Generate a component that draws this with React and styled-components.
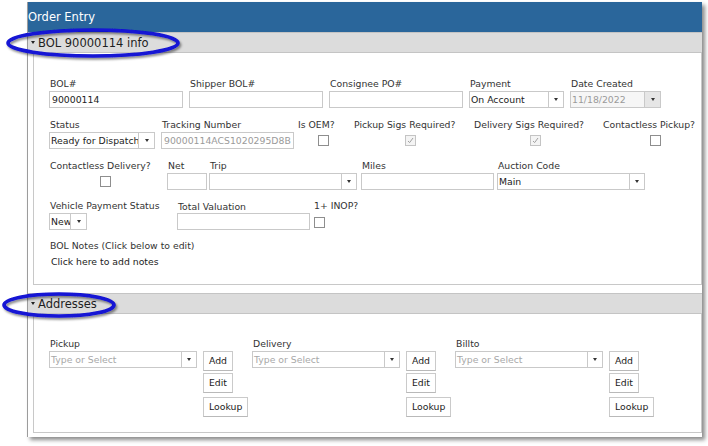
import React from "react";
import styled, { createGlobalStyle } from "styled-components";

const Global = createGlobalStyle`
  html, body { margin: 0; padding: 0; background: #fff; }
  body { font-family: "DejaVu Sans", Verdana, sans-serif; }
  * { box-sizing: border-box; }
`;

const Page = styled.div`
  position: relative;
  width: 708px;
  height: 446px;
  padding: 2px 0 0 27px;
  overflow: hidden;
`;

const Window = styled.div`
  width: 675px;
  background: #fff;
  border-left: 1px solid #9c9c9c;
  box-shadow: 3px 3px 4px rgba(0, 0, 0, 0.45);
  padding-bottom: 4px;
  display: flex;
  flex-direction: column;
`;

const TitleBar = styled.div`
  height: 30px;
  background: #2a669b;
  color: #fff;
  font-size: 11.5px;
  display: flex;
  align-items: center;
  padding-left: 0;
`;

const SectionHeader = styled.div`
  height: 21px;
  margin-top: ${(p) => p.$mt || 0}px;
  background: #dcdcdc;
  border-top: 1px solid #c4c4c4;
  border-bottom: 1px solid #c4c4c4;
  display: flex;
  align-items: center;
  padding-left: 3px;
  font-size: 11.5px;
  color: #1e1e1e;
`;

const Caret = styled.span`
  width: 0;
  height: 0;
  border-left: 2.5px solid transparent;
  border-right: 2.5px solid transparent;
  border-top: 3px solid #222;
  margin-right: 3px;
`;

const SectionBody = styled.div`
  margin-left: 5px;
  border: 1px solid #c8c8c8;
  border-top: none;
  padding: ${(p) => p.$pt}px 0 ${(p) => p.$pb}px 15px;
  font-size: 9.3px;
  color: #333;
`;

const Row = styled.div`
  display: flex;
  align-items: flex-start;
  margin-top: ${(p) => p.$mt || 0}px;
`;

const Field = styled.div`
  display: flex;
  flex-direction: column;
  width: ${(p) => p.$w}px;
  margin-left: ${(p) => p.$ml || 0}px;
  flex-shrink: 0;
`;

const Label = styled.div`
  height: 12px;
  line-height: 12px;
  margin-bottom: 1px;
  padding-left: 1px;
  white-space: nowrap;
  color: #333;
  font-size: 9.3px;
  margin-top: ${(p) => p.$drop || 0}px;
`;

const TextBox = styled.input`
  width: ${(p) => (p.$w ? p.$w + "px" : "100%")};
  height: 17px;
  border: 1px solid #c9c9c9;
  padding: 0 2px;
  margin: 0;
  font-family: "DejaVu Sans", Verdana, sans-serif;
  font-size: 9.3px;
  color: ${(p) => (p.$muted ? "#9a9a9a" : "#222")};
  background: #fff;
  outline: none;
  &::placeholder { color: #a8a8a8; }
`;

const SelectBox = styled.div`
  width: ${(p) => p.$w}px;
  height: 17px;
  border: 1px solid #c9c9c9;
  display: flex;
  background: ${(p) => (p.$disabled ? "#f6f6f6" : "#fff")};
`;

const SelectText = styled.div`
  flex: 1;
  min-width: 0;
  padding-left: 1px;
  line-height: 15px;
  white-space: nowrap;
  overflow: hidden;
  font-size: 9.3px;
  color: ${(p) => (p.$tone === "muted" ? "#9a9a9a" : p.$tone === "ph" ? "#a8a8a8" : "#222")};
`;

const SelectArrow = styled.div`
  width: ${(p) => p.$aw || 15}px;
  border-left: 1px solid #c9c9c9;
  display: flex;
  align-items: center;
  justify-content: center;
  background: ${(p) => (p.$disabled ? "#e6e6e6" : "transparent")};
  &::after {
    content: "";
    border-left: 2.5px solid transparent;
    border-right: 2.5px solid transparent;
    border-top: 3px solid #333;
  }
`;

const CheckColumn = styled.div`
  display: flex;
  flex-direction: column;
  width: ${(p) => p.$w}px;
  margin-left: ${(p) => p.$ml || 0}px;
  flex-shrink: 0;
`;

const CheckBox = styled.span`
  display: block;
  width: 11px;
  height: 11px;
  margin-top: ${(p) => p.$mt || 3}px;
  margin-left: ${(p) => p.$off}px;
  border: 1px solid ${(p) => (p.$checked ? "#c4c4c4" : "#8e8e8e")};
  background: ${(p) => (p.$checked ? "#f4f4f4" : "#fff")};
  position: relative;
  svg { position: absolute; left: 1px; top: 1px; }
`;

const NotesTitle = styled.div`
  margin-top: 10px;
  height: 12px;
  line-height: 12px;
  padding-left: 1px;
  color: #333;
`;

const NotesLink = styled.div`
  margin-top: 4px;
  height: 12px;
  line-height: 12px;
  padding-left: 2px;
  color: #222;
`;

const AddressRow = styled.div`
  display: flex;
  align-items: flex-start;
`;

const AddressGroup = styled.div`
  width: 203px;
  display: flex;
  align-items: flex-start;
  flex-shrink: 0;
`;

const ButtonStack = styled.div`
  display: flex;
  flex-direction: column;
  align-items: flex-start;
  margin-left: 6px;
  margin-top: 13px;
`;

const SmallButton = styled.button`
  height: 20px;
  margin: ${(p) => p.$mt || 0}px 0 0 0;
  padding: 0 5px;
  border: 1px solid #cacaca;
  border-bottom-color: #b9b9b9;
  background: #fff;
  font-family: "DejaVu Sans", Verdana, sans-serif;
  font-size: 9.3px;
  color: #222;
  line-height: 18px;
`;

const Annotation = styled.svg`
  position: absolute;
  left: 0;
  top: 0;
  pointer-events: none;
`;

function Select({ w, value, tone, disabled, aw }) {
  return (
    <SelectBox $w={w} $disabled={disabled}>
      <SelectText $tone={tone}>{value}</SelectText>
      <SelectArrow $aw={aw} $disabled={disabled} />
    </SelectBox>
  );
}

function Check({ checked, off, mt }) {
  return (
    <CheckBox $checked={checked} $off={off} $mt={mt}>
      {checked && (
        <svg width="7" height="7" viewBox="0 0 7 7">
          <path d="M1 4 L2.6 5.6 L6 1" fill="none" stroke="#a0a0a0" strokeWidth="1" />
        </svg>
      )}
    </CheckBox>
  );
}

function Address({ label }) {
  return (
    <AddressGroup>
      <Field $w={148}>
        <Label>{label}</Label>
        <Select w={148} value="Type or Select" tone="ph" />
      </Field>
      <ButtonStack>
        <SmallButton>Add</SmallButton>
        <SmallButton $mt={2}>Edit</SmallButton>
        <SmallButton $mt={4}>Lookup</SmallButton>
      </ButtonStack>
    </AddressGroup>
  );
}

export default function App() {
  return (
    <>
      <Global />
      <Page>
        <Window>
          <TitleBar>Order Entry</TitleBar>
          <SectionHeader>
            <Caret />
            BOL 90000114 info
          </SectionHeader>
          <SectionBody $pt={25} $pb={16}>
            <Row>
              <Field $w={134}>
                <Label>BOL#</Label>
                <TextBox readOnly defaultValue="90000114" />
              </Field>
              <Field $w={134} $ml={6}>
                <Label>Shipper BOL#</Label>
                <TextBox readOnly defaultValue="" />
              </Field>
              <Field $w={134} $ml={6}>
                <Label>Consignee PO#</Label>
                <TextBox readOnly defaultValue="" />
              </Field>
              <Field $w={95} $ml={6}>
                <Label>Payment</Label>
                <Select w={95} value="On Account" />
              </Field>
              <Field $w={91} $ml={6}>
                <Label>Date Created</Label>
                <Select w={91} value="11/18/2022" tone="muted" disabled aw={16} />
              </Field>
            </Row>

            <Row $mt={11}>
              <Field $w={106}>
                <Label>Status</Label>
                <Select w={106} value="Ready for Dispatch" aw={16} />
              </Field>
              <Field $w={133} $ml={6}>
                <Label>Tracking Number</Label>
                <TextBox readOnly $muted defaultValue="90000114ACS1020295D8B" />
              </Field>
              <CheckColumn $w={56} $ml={3}>
                <Label>Is OEM?</Label>
                <Check off={21} />
              </CheckColumn>
              <CheckColumn $w={120}>
                <Label>Pickup Sigs Required?</Label>
                <Check checked off={52} />
              </CheckColumn>
              <CheckColumn $w={129}>
                <Label>Delivery Sigs Required?</Label>
                <Check checked off={57} />
              </CheckColumn>
              <CheckColumn $w={95}>
                <Label>Contactless Pickup?</Label>
                <Check off={48} />
              </CheckColumn>
            </Row>

            <Row $mt={11}>
              <CheckColumn $w={118}>
                <Label>Contactless Delivery?</Label>
                <Check off={51} />
              </CheckColumn>
              <Field $w={40}>
                <Label>Net</Label>
                <TextBox readOnly defaultValue="" />
              </Field>
              <Field $w={148} $ml={2}>
                <Label>Trip</Label>
                <Select w={148} value="" />
              </Field>
              <Field $w={133} $ml={4}>
                <Label>Miles</Label>
                <TextBox readOnly defaultValue="" />
              </Field>
              <Field $w={148} $ml={3}>
                <Label>Auction Code</Label>
                <Select w={148} value="Main" />
              </Field>
            </Row>

            <Row $mt={10}>
              <Field $w={128}>
                <Label>Vehicle Payment Status</Label>
                <Select w={38} value="New" aw={16} />
              </Field>
              <Field $w={133}>
                <Label $drop={1}>Total Valuation</Label>
                <TextBox readOnly defaultValue="" style={{ marginTop: -1 }} />
              </Field>
              <CheckColumn $w={60} $ml={3}>
                <Label>1+ INOP?</Label>
                <Check off={1} mt={4} />
              </CheckColumn>
            </Row>

            <NotesTitle>BOL Notes (Click below to edit)</NotesTitle>
            <NotesLink>Click here to add notes</NotesLink>
          </SectionBody>

          <SectionHeader $mt={8}>
            <Caret />
            Addresses
          </SectionHeader>
          <SectionBody $pt={24} $pb={15}>
            <AddressRow>
              <Address label="Pickup" />
              <Address label="Delivery" />
              <Address label="Billto" />
            </AddressRow>
          </SectionBody>
        </Window>

        <Annotation width="708" height="446" viewBox="0 0 708 446">
          <defs>
            <filter id="sh" x="-20%" y="-50%" width="140%" height="200%">
              <feDropShadow dx="1.5" dy="2" stdDeviation="1.3" floodColor="#000" floodOpacity="0.45" />
            </filter>
          </defs>
          <ellipse cx="93" cy="43" rx="85" ry="13" fill="none" stroke="#1212d4" strokeWidth="3.6" filter="url(#sh)" />
          <ellipse cx="59" cy="305" rx="55" ry="11" fill="none" stroke="#1212d4" strokeWidth="3.6" filter="url(#sh)" />
        </Annotation>
      </Page>
    </>
  );
}
